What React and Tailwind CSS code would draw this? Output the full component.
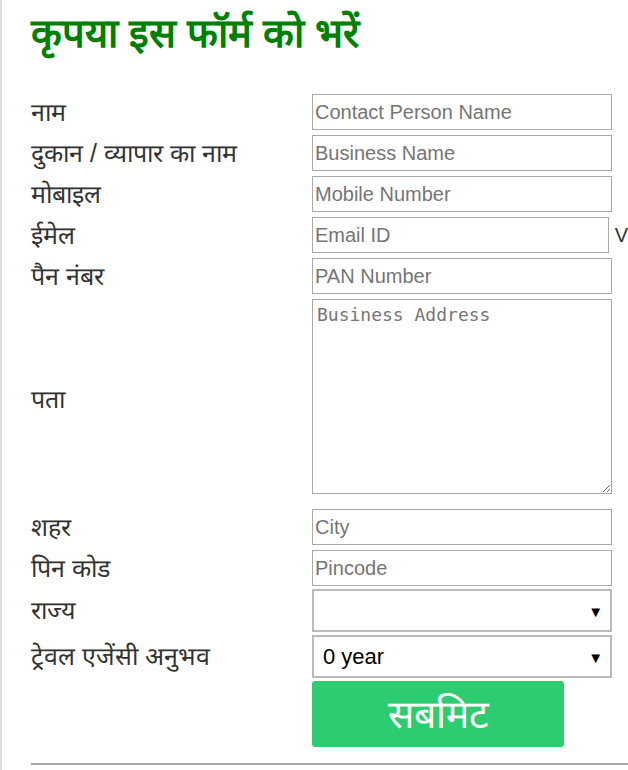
export default function App() {
  const inputCls =
    "w-[300px] h-[36px] border border-[#a9a9a9] px-[2px] text-[20px] text-black placeholder:text-[#757575] outline-none bg-white";
  const labelCls = "w-[281px] shrink-0 text-[25px] text-[#333] leading-none";
  const rows = [
    ["नाम", "Contact Person Name"],
    ["दुकान / व्यापार का नाम", "Business Name"],
    ["मोबाइल", "Mobile Number"],
    ["ईमेल", "Email ID"],
    ["पैन नंबर", "PAN Number"],
  ];
  return (
    <div
      className="relative w-[628px] h-[770px] overflow-hidden bg-white border-l-2 border-[#dddddd]"
      style={{ fontFamily: '"Liberation Sans", Arial, sans-serif' }}
    >
      <div className="pl-[29px]">
        <h1 className="pt-[9px] h-[94px] text-[40px] font-bold text-[#008000] leading-[48px]">
          कृपया इस फॉर्म को भरें
        </h1>
        {rows.map(([l, p], i) => (
          <div key={i} className={`flex items-center ${i === 0 ? "" : "mt-[5px]"}`}>
            <div className={labelCls}>{l}</div>
            <input className={inputCls} placeholder={p} />
            {p === "Email ID" && (
              <span className="ml-[6px] text-[20px] text-[#333]">V</span>
            )}
          </div>
        ))}
        <div className="flex items-center mt-[5px]">
          <div className={`${labelCls} pt-[6px]`}>पता</div>
          <textarea
            className="w-[300px] h-[195px] border border-[#a9a9a9] px-[4px] py-[1px] text-[18px] placeholder:text-[#757575] outline-none resize-y"
            style={{ fontFamily: '"DejaVu Sans Mono", monospace' }}
            placeholder="Business Address"
          />
        </div>
        <div className="flex items-center mt-[15px]">
          <div className={labelCls}>शहर</div>
          <input className={inputCls} placeholder="City" />
        </div>
        <div className="flex items-center mt-[5px]">
          <div className={labelCls}>पिन कोड</div>
          <input className={inputCls} placeholder="Pincode" />
        </div>
        <div className="flex items-center mt-[3px]">
          <div className={labelCls}>राज्य</div>
          <div className="relative w-[300px] h-[43px] border-2 border-[#bbbbbb] bg-white">
            <span className="absolute right-[7px] top-[10px] text-[15px] text-black">▼</span>
          </div>
        </div>
        <div className="flex items-center mt-[3px]">
          <div className={labelCls}>ट्रेवल एजेंसी अनुभव</div>
          <div className="relative w-[300px] h-[43px] border-2 border-[#bbbbbb] bg-white flex items-center pl-[9px]">
            <span className="text-[22px] text-black">0 year</span>
            <span className="absolute right-[7px] top-[10px] text-[15px] text-black">▼</span>
          </div>
        </div>
        <div className="flex mt-[3px]">
          <div className="w-[281px] shrink-0" />
          <button className="w-[252px] h-[66px] rounded-[3px] bg-[#2ecc71] text-white text-[39px] leading-none">
            सबमिट
          </button>
        </div>
        <div className="mt-[16px] h-[2px] bg-[#aaaaaa] w-[597px]" />
      </div>
    </div>
  );
}
